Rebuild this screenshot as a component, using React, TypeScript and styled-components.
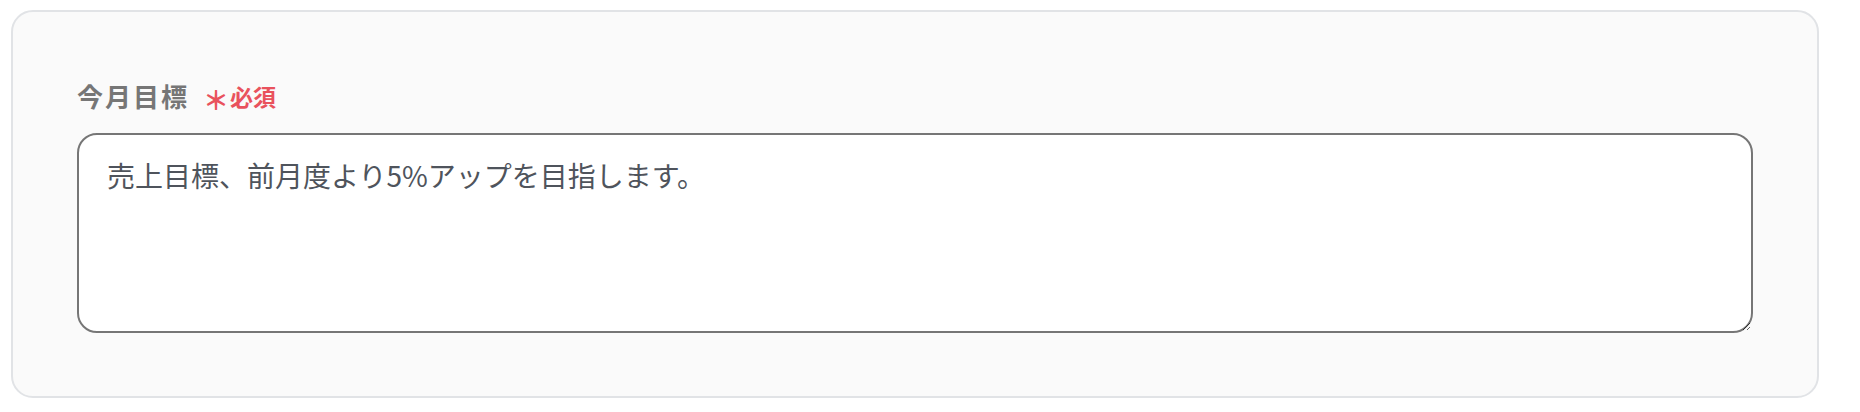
import React, { useState } from "react";
import styled, { createGlobalStyle } from "styled-components";

const GlobalStyle = createGlobalStyle`
  body {
    margin: 0;
    background: #ffffff;
    font-family: "Noto Sans CJK JP", "Noto Sans", sans-serif;
  }
`;

export default function App() {
  const [goal, setGoal] = useState("売上目標、前月度より5%アップを目指します。");

  return (
    <>
      <GlobalStyle />
      <StyledPage>
        <StyledCard>
          <StyledLabelRow>
            <StyledLabel htmlFor="goal">今月目標</StyledLabel>
            <StyledRequired>
              <StyledAsterisk>＊</StyledAsterisk>必須
            </StyledRequired>
          </StyledLabelRow>
          <StyledTextarea id="goal" value={goal} onChange={(e) => setGoal(e.target.value)} />
        </StyledCard>
      </StyledPage>
    </>
  );
}

const StyledPage = styled.div`
  padding: 10px 41px 14px 11px;
`;

const StyledCard = styled.section`
  display: flex;
  flex-direction: column;
  gap: 19px;
  box-sizing: border-box;
  width: 100%;
  padding: 66px 64px 63px 64px;
  background: #fafafa;
  border: 2px solid #e1e3e6;
  border-radius: 22px;
`;

const StyledLabelRow = styled.div`
  display: flex;
  align-items: center;
  gap: 14px;
  height: 36px;
`;

const StyledLabel = styled.label`
  font-size: 26px;
  font-weight: 700;
  letter-spacing: 2px;
  color: #767676;
  line-height: 36px;
`;

const StyledRequired = styled.span`
  display: flex;
  align-items: center;
  font-size: 23px;
  font-weight: 700;
  color: #e9525d;
  line-height: 36px;
`;

const StyledAsterisk = styled.span`
  font-size: 26px;
  margin-right: 1px;
  transform: translateY(3px);
`;

const StyledTextarea = styled.textarea`
  box-sizing: border-box;
  width: 100%;
  height: 200px;
  padding: 21px 28px;
  border: 2px solid #767676;
  border-radius: 20px;
  background: #ffffff;
  font-family: "Noto Sans CJK JP", "Noto Sans", sans-serif;
  font-size: 28px;
  line-height: 38px;
  color: #4f545c;
  outline: none;
`;
